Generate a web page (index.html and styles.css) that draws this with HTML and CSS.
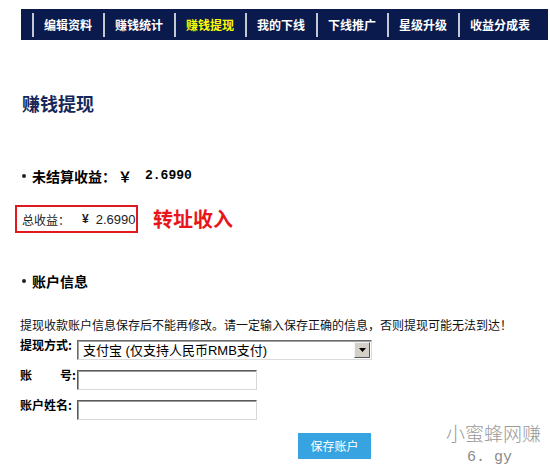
FILE: index.html
```html
<!DOCTYPE html>
<html lang="zh-CN">
<head>
<meta charset="utf-8">
<title>赚钱提现</title>
<link rel="stylesheet" href="styles.css">
</head>
<body>
<div class="page">
  <nav class="nav">
    <a href="#">编辑资料</a>
    <a href="#">赚钱统计</a>
    <a href="#" class="active">赚钱提现</a>
    <a href="#">我的下线</a>
    <a href="#">下线推广</a>
    <a href="#">星级升级</a>
    <a href="#" class="last">收益分成表</a>
  </nav>

  <h1 class="title">赚钱提现</h1>

  <div class="bullet stat">
    <span>未结算收益：</span><span class="yen">￥</span><span class="num">2.6990</span>
  </div>

  <div class="total-row">
    <div class="total-box">
      <span>总收益：</span><span class="yen2">¥</span><span class="num2">2.6990</span>
    </div>
    <span class="note">转址收入</span>
  </div>

  <div class="bullet section">账户信息</div>

  <p class="notice">提现收款账户信息保存后不能再修改。请一定输入保存正确的信息，否则提现可能无法到达！</p>

  <form class="form">
    <label class="lbl">提现方式:</label>
    <div class="select">
      <select class="select-inner">
        <option>支付宝 (仅支持人民币RMB支付)</option>
      </select>
      <span class="arrow"><svg width="7" height="4" viewBox="0 0 7 4"><path d="M0 0h7L3.5 4z" fill="#000"/></svg></span>
    </div>

    <label class="lbl spread"><span>账</span><span>号:</span></label>
    <input class="field" type="text">

    <label class="lbl">账户姓名:</label>
    <input class="field" type="text">
  </form>

  <div class="actions">
    <button class="save" type="button">保存账户</button>
  </div>

  <div class="watermark">
    <div class="wm1">小蜜蜂网赚</div>
    <div class="wm2">6. gy</div>
  </div>
</div>
</body>
</html>
```

FILE: styles.css
```css
html, body {
  margin: 0;
  padding: 0;
  background: #fff;
  overflow: hidden;
}

body {
  font-family: "Noto Sans CJK SC", "Liberation Sans", sans-serif;
  color: #000;
}

.page {
  position: relative;
  height: 474px;
  box-sizing: border-box;
  padding: 9px 2px 0 21px;
}

.nav {
  display: flex;
  align-items: center;
  height: 31px;
  background: #0b1a4c;
  padding-left: 11px;
}

.nav a {
  display: block;
  height: 24px;
  line-height: 24px;
  padding: 0 11px 0 10px;
  border-left: 2px solid #c4c8d4;
  color: #fff;
  font-size: 12px;
  font-weight: bold;
  text-decoration: none;
  white-space: nowrap;
}

.nav a.active {
  color: #ffff00;
}

.nav a.last {
  flex: 1;
}

.title {
  margin: 51px 0 0 1px;
  font-size: 18px;
  line-height: 24px;
  font-weight: bold;
  color: #16285a;
}

.bullet {
  display: flex;
  align-items: center;
  font-size: 14px;
  line-height: 20px;
  font-weight: bold;
  padding-left: 1px;
}

.bullet::before {
  content: "";
  width: 4px;
  height: 4px;
  border-radius: 50%;
  background: #222;
  margin-right: 6px;
}

.stat {
  margin-top: 51px;
}

.yen {
  margin-left: 2px;
}

.num {
  margin-left: 13px;
  font-family: "Liberation Mono", monospace;
  font-size: 13px;
  font-weight: bold;
}

.total-row {
  display: flex;
  align-items: center;
  margin-top: 19px;
  margin-left: -6px;
}

.total-box {
  box-sizing: border-box;
  width: 123px;
  height: 28px;
  border: 2px solid #e0191e;
  padding-left: 5px;
  display: flex;
  align-items: center;
  font-size: 12px;
  color: #222;
  white-space: nowrap;
}

.yen2 {
  margin-left: 12px;
  font-family: "Liberation Sans", sans-serif;
  font-size: 12px;
  font-weight: bold;
}

.num2 {
  margin-left: 7px;
  font-family: "Liberation Sans", sans-serif;
  font-size: 13px;
}

.note {
  margin-left: 15px;
  font-size: 20px;
  font-weight: bold;
  color: #e8161b;
  line-height: 24px;
}

.section {
  margin-top: 38px;
}

.notice {
  margin: 26px 0 0 -1px;
  font-size: 12px;
  line-height: 16px;
  color: #111;
  white-space: nowrap;
}

.form {
  display: grid;
  grid-template-columns: 57px auto;
  justify-content: start;
  row-gap: 10px;
  margin: 7px 0 0 -1px;
}

.lbl {
  align-self: start;
  margin-top: -2px;
  font-size: 12px;
  line-height: 14px;
  font-weight: bold;
  white-space: nowrap;
}

.lbl.spread {
  display: flex;
  justify-content: space-between;
  padding-right: 1px;
}

.select {
  box-sizing: border-box;
  width: 295px;
  height: 20px;
  display: flex;
  border: 1px solid;
  border-color: #6b6b6b #dcdcdc #dcdcdc #6b6b6b;
  box-shadow: inset 1px 1px 0 #a0a0a0;
  background: #fff;
}

.select-inner {
  flex: 1;
  appearance: none;
  -webkit-appearance: none;
  border: none;
  outline: none;
  background: transparent;
  font-family: "Liberation Sans", "Noto Sans CJK SC", sans-serif;
  font-size: 13px;
  line-height: 16px;
  padding: 0 0 0 4px;
  margin: 1px 0 0 1px;
  color: #000;
}

.arrow {
  box-sizing: border-box;
  width: 16px;
  margin: 1px 1px 1px 0;
  display: flex;
  align-items: center;
  justify-content: center;
  background: #d4d0c8;
  border: 1px solid;
  border-color: #f4f4f4 #555 #555 #f4f4f4;
}

.field {
  box-sizing: border-box;
  width: 180px;
  height: 20px;
  margin: 0;
  padding: 0 3px;
  border: 1px solid;
  border-color: #5a5a5a #d8d8d8 #d8d8d8 #5a5a5a;
  box-shadow: inset 1px 1px 0 #9a9a9a;
  font-size: 12px;
  outline: none;
}

.actions {
  margin: 12px 0 0 277px;
}

.save {
  width: 73px;
  height: 26px;
  border: none;
  background: #37a3e0;
  color: #fff;
  font-family: "Noto Sans CJK SC", sans-serif;
  font-size: 12px;
  padding: 0;
  cursor: pointer;
}

.watermark {
  position: absolute;
  left: 446px;
  top: 422px;
  color: #9a9a9a;
  pointer-events: none;
}

.wm1 {
  font-size: 19px;
  line-height: 22px;
  font-weight: 300;
  white-space: nowrap;
}

.wm2 {
  margin: 7px 0 0 21px;
  font-family: "Liberation Mono", monospace;
  font-size: 15px;
  line-height: 14px;
  color: #8a8a8a;
}
```
